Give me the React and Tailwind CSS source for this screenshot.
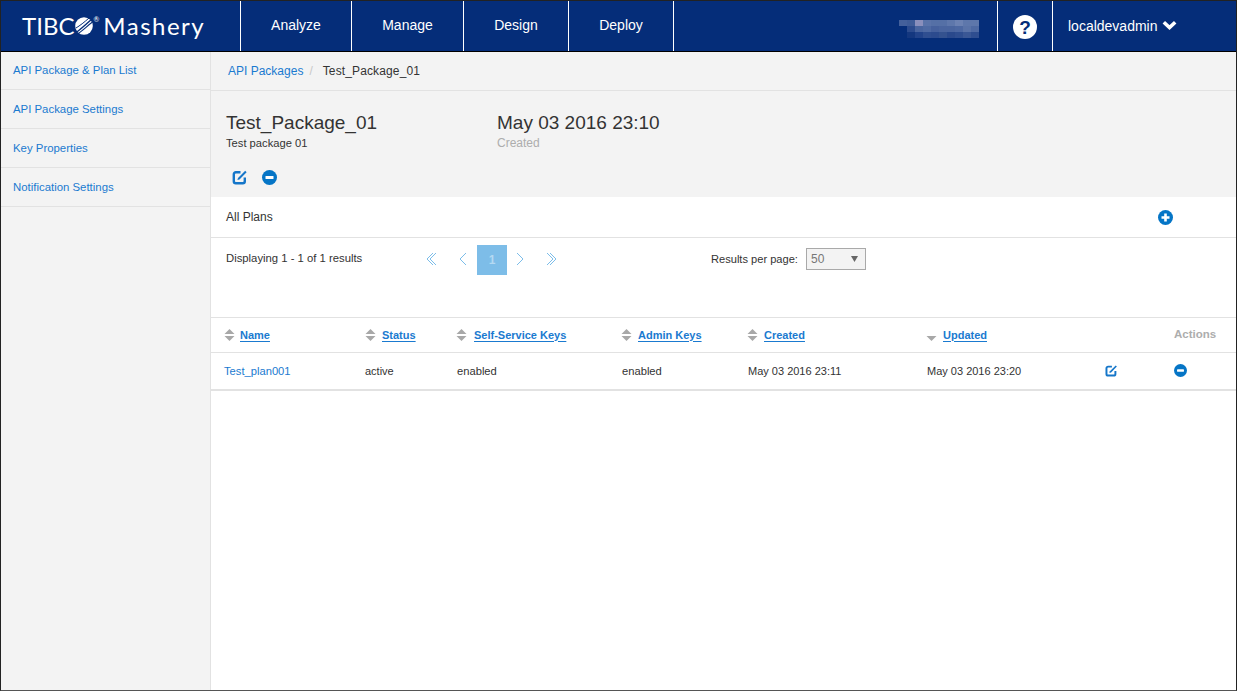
import React from "react";

const sideLinks = [
  { label: "API Package & Plan List", height: "h-[38px] pt-[11px]" },
  { label: "API Package Settings", height: "h-[39px] pt-[12px]" },
  { label: "Key Properties", height: "h-[39px] pt-[12px]" },
  { label: "Notification Settings", height: "h-[39px] pt-[12px]" },
];
const navLinks = [
  { label: "Analyze", width: "w-[111px]" },
  { label: "Manage", width: "w-[112px]" },
  { label: "Design", width: "w-[105px]" },
  { label: "Deploy", width: "w-[106px]" },
];

// pixelated block that hides the account name
const blurRows = [
  ["#44609b", "#3f5c98", "#8a8fbc", "#5a73a9", "#5570a6", "#5570a6", "#5e77ab", "#6b81b2", "#5e77ab", "#5e77ab"],
  ["#052d79", "#2c4b8e", "#4a659f", "#4f6aa3", "#46619d", "#4a659f", "#4a659f", "#4d68a2", "#5a73a8", "#4f6aa3"],
  ["#052d79", "#14377f", "#22438a", "#2f4e90", "#2c4b8e", "#34528f", "#2a498c", "#2f4e90", "#3a5795", "#2f4e90"],
];

function SortArrows({ upOff }) {
  return (
    <svg width="11" height="14" viewBox="0 0 11 14" className="shrink-0">
      {!upOff && <path d="M5.5 1 L10.5 6 H0.5 Z" fill="#a8a8a8" />}
      <path d="M5.5 13 L10.5 8 H0.5 Z" fill="#a8a8a8" />
    </svg>
  );
}

function EditIcon({ size = 16 }) {
  return (
    <svg width={size} height={size} viewBox="0 0 16 16" fill="none">
      <path d="M8.5 3.2 H3.8 A2 2 0 0 0 1.8 5.2 V12.2 A2 2 0 0 0 3.8 14.2 H10.8 A2 2 0 0 0 12.8 12.2 V8.5" stroke="#1576c9" strokeWidth="2.4" />
      <path d="M6 8.9 L5.4 11 L7.5 10.4 L14.6 3.2 L13.2 1.8 Z" fill="#1576c9" />
    </svg>
  );
}

function MinusIcon({ size = 15 }) {
  return (
    <svg width={size} height={size} viewBox="0 0 15 15">
      <circle cx="7.5" cy="7.5" r="7.5" fill="#0575c6" />
      <rect x="3.5" y="6" width="8" height="3" rx="0.5" fill="#fff" />
    </svg>
  );
}

function PlusIcon() {
  return (
    <svg width="15" height="15" viewBox="0 0 15 15">
      <circle cx="7.5" cy="7.5" r="7.5" fill="#0575c6" />
      <path d="M6.2 3.5 H8.8 V6.2 H11.5 V8.8 H8.8 V11.5 H6.2 V8.8 H3.5 V6.2 H6.2 Z" fill="#fff" />
    </svg>
  );
}

function Chevron({ dir = "left", double }) {
  const flip = dir === "right" ? "scale(-1 1) translate(-10 0)" : undefined;
  return (
    <svg width="10" height="14" viewBox="0 0 10 14" fill="none" stroke="#7cbde9" strokeWidth="1" className="shrink-0">
      <g transform={flip}>
        <path d={double ? "M7 1 L1 7 L7 13" : "M8 1 L2 7 L8 13"} />
        {double && <path d="M10 1 L4 7 L10 13" />}
      </g>
    </svg>
  );
}

function HeaderCell({ width, label, upOff, gap = "ml-[6px]" }) {
  return (
    <div className={`${width} flex items-center`}>
      <SortArrows upOff={upOff} />
      <a className={`${gap} font-bold text-[11px] text-[#1a7ad0] underline underline-offset-2`}>{label}</a>
    </div>
  );
}

function Logo() {
  return (
    <div className="w-[239px] flex items-center pl-[21px] text-white font-['Lato','Open_Sans',sans-serif] text-[24px] leading-none shrink-0">
      <span>TIBC</span>
      <svg width="18" height="18" viewBox="0 0 18 18" className="ml-[1px] shrink-0">
        <circle cx="9" cy="9" r="8.8" fill="#fff" />
        <path d="M1.5 15 C6 12 11 7 16.5 2.5" fill="none" stroke="#052d79" strokeWidth="1.4" />
        <path d="M3 16.5 C8 13.5 12 9 17.5 5" fill="none" stroke="#052d79" strokeWidth="1.1" />
        <path d="M1 11 C5 8.5 9 5.5 14 1" fill="none" stroke="#052d79" strokeWidth="1" />
      </svg>
      <span className="text-[7px] self-start mt-[15px] mr-[4px]">®</span>
      <span className="tracking-[1.5px]">Mashery</span>
    </div>
  );
}

export default function App() {
  return (
    <div className="w-[1237px] h-[691px] flex flex-col border border-[#222] border-b-[#555] font-['Liberation_Sans',Arial,sans-serif] text-[12px] text-[#333] bg-white overflow-hidden">
      <header className="h-[51px] shrink-0 bg-[#052d79] border-b border-black flex text-white box-border">
        <Logo />
        {navLinks.map((n) => (
          <div key={n.label} className={`${n.width} border-l border-white flex items-center justify-center text-[14px] pb-[2px] ${n.label === "Deploy" ? "border-r" : ""}`}>
            <span>{n.label}</span>
          </div>
        ))}
        <div className="flex-1 flex items-center justify-end pr-[18px]">
          <div className="flex flex-col pt-[5px]">
            {blurRows.map((row, i) => (
              <div key={i} className="flex">
                {row.map((c, j) => (
                  <div key={j} className="w-[8px] h-[6px]" style={{ backgroundColor: c }} />
                ))}
              </div>
            ))}
          </div>
        </div>
        <div className="w-[55px] border-l border-white flex items-center justify-center pt-[2px]">
          <div className="w-[24px] h-[24px] rounded-full bg-white flex items-center justify-center text-[#052d79] font-bold text-[19px] leading-none">?</div>
        </div>
        <div className="w-[184px] border-l border-white flex items-center pl-[15px] text-[14px]">
          <span>localdevadmin</span>
          <svg width="15" height="10" viewBox="0 0 15 10" className="ml-[4px] mb-[2px]">
            <path d="M1.8 2.2 L7.5 7.5 L13.2 2.2" fill="none" stroke="#fff" strokeWidth="3.6" />
          </svg>
        </div>
      </header>

      <div className="flex flex-1 min-h-0">
        <aside className="w-[210px] shrink-0 bg-[#f3f3f3] border-r border-[#e2e2e2]">
          {sideLinks.map((l) => (
            <div key={l.label} className={`${l.height} border-b border-[#e2e2e2] pl-[12px] leading-[14px] text-[11.4px] text-[#1a7ad0]`}>{l.label}</div>
          ))}
        </aside>

        <main className="flex-1 min-w-0 flex flex-col">
          <div className="h-[39px] shrink-0 bg-[#f3f3f3] border-b border-[#e2e2e2] flex items-center pl-[17px] pb-[1px]">
            <a className="text-[#1a7ad0]">API Packages</a>
            <span className="text-[#c8c8c8] ml-[6px]">/</span>
            <span className="ml-[10px] tracking-[0.13px]">Test_Package_01</span>
          </div>

          <section className="h-[106px] shrink-0 bg-[#f3f3f3] pl-[15px] pt-[20px]">
            <div className="flex">
              <div className="w-[271px]">
                <div className="text-[19px] leading-[23px]">Test_Package_01</div>
                <div className="leading-[14px] text-[11.2px] mt-[2px]">Test package 01</div>
              </div>
              <div>
                <div className="text-[19px] leading-[23px]">May 03 2016 23:10</div>
                <div className="leading-[14px] mt-[2px] text-[#adadad]">Created</div>
              </div>
            </div>
            <div className="flex items-center mt-[19px] pl-[6px] gap-[14px]">
              <EditIcon />
              <MinusIcon />
            </div>
          </section>

          <div className="h-[41px] shrink-0 border-b border-[#e2e2e2] flex items-center justify-between pl-[15px] pr-[63px]">
            <span>All Plans</span>
            <PlusIcon />
          </div>

          <div className="h-[80px] shrink-0 border-b border-[#e2e2e2] flex items-start pl-[15px] pt-[7px]">
            <div className="w-[191px] pt-[6px] leading-[14px] text-[11.3px]">Displaying 1 - 1 of 1 results</div>
            <div className="w-[294px] flex items-center">
              <div className="ml-[9px] pb-[2px] flex"><Chevron double /></div>
              <div className="ml-[22px] pb-[2px] flex"><Chevron /></div>
              <div className="w-[30px] h-[30px] ml-[9px] bg-[#7dbde8] flex items-center justify-center text-[#b4d9f2] font-bold">1</div>
              <div className="ml-[8px] pb-[2px] flex"><Chevron dir="right" /></div>
              <div className="ml-[22px] pb-[2px] flex"><Chevron dir="right" double /></div>
            </div>
            <div className="flex items-center pt-[3px]">
              <span className="text-[11.1px]">Results per page:</span>
              <div className="w-[60px] h-[22px] ml-[8px] bg-[#f3f3f3] border border-[#a9a9a9] flex items-center justify-between pl-[4px] pr-[7px] text-[#777]">
                <span>50</span>
                <svg width="7" height="6" viewBox="0 0 7 6"><path d="M0 0 H7 L3.5 6 Z" fill="#666" /></svg>
              </div>
            </div>
          </div>

          <div className="h-[35px] shrink-0 border-b border-[#e2e2e2] flex items-center pl-[13px]">
            <HeaderCell width="w-[141px]" label="Name" gap="ml-[5px]" />
            <HeaderCell width="w-[91px]" label="Status" />
            <HeaderCell width="w-[165px]" label="Self-Service Keys" gap="ml-[7px]" />
            <HeaderCell width="w-[126px]" label="Admin Keys" />
            <HeaderCell width="w-[179px]" label="Created" />
            <HeaderCell width="w-[248px]" label="Updated" upOff />
            <span className="font-bold text-[11.5px] text-[#adadad]">Actions</span>
          </div>

          <div className="h-[38px] shrink-0 border-b-2 border-[#e2e2e2] flex items-center pl-[13px] text-[11px]">
            <a className="w-[141px] text-[11.2px] text-[#1a7ad0]">Test_plan001</a>
            <span className="w-[92px]">active</span>
            <span className="w-[165px] text-[11.2px]">enabled</span>
            <span className="w-[126px] text-[11.2px]">enabled</span>
            <span className="w-[179px]">May 03 2016 23:11</span>
            <span className="w-[178px]">May 03 2016 23:20</span>
            <span className="w-[69px] flex pb-[2px]"><EditIcon size={13} /></span>
            <span className="flex pb-[1px]"><MinusIcon size={13} /></span>
          </div>
        </main>
      </div>
    </div>
  );
}
